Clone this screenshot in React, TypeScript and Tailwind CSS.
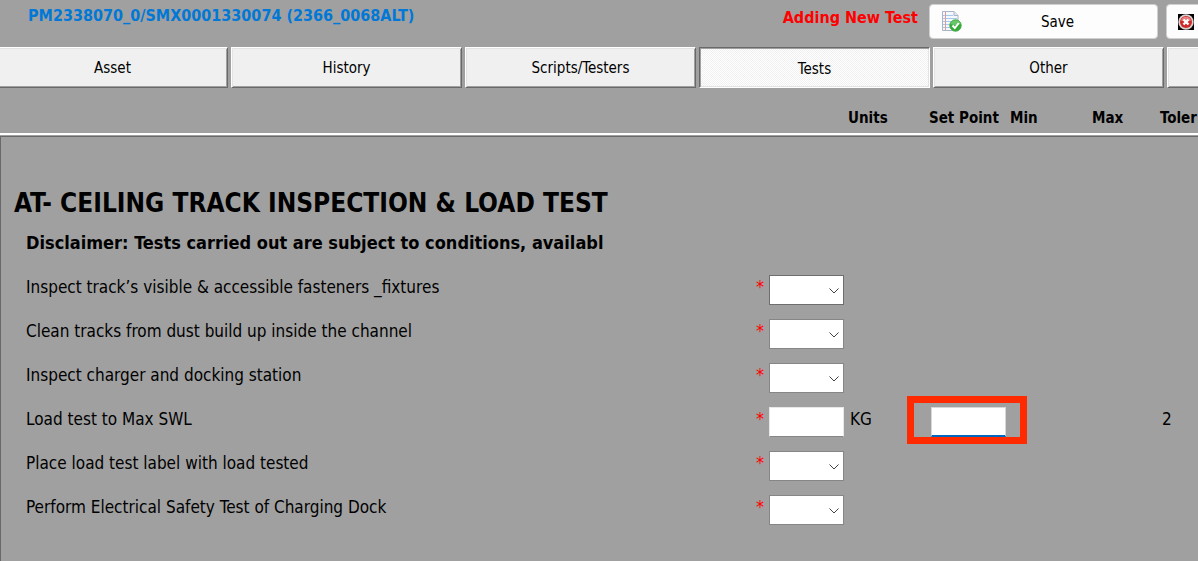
import React from "react";

type Test = { id: string; label: string; kind: "select" | "number"; units?: string; tolerance?: string };

const tests: Test[] = [
  { id: "fasteners", label: "Inspect track’s visible & accessible fasteners _fixtures", kind: "select" },
  { id: "clean", label: "Clean tracks from dust build up inside the channel", kind: "select" },
  { id: "charger", label: "Inspect charger and docking station", kind: "select" },
  { id: "load", label: "Load test to Max SWL", kind: "number", units: "KG", tolerance: "2" },
  { id: "label", label: "Place load test label with load tested", kind: "select" },
  { id: "safety", label: "Perform Electrical Safety Test of Charging Dock", kind: "select" },
];

const tabs = ["Asset", "History", "Scripts/Testers", "Tests", "Other", ""];

function SaveIcon() {
  return (
    <svg width="20" height="21" viewBox="0 0 20 21" aria-hidden="true">
      <path d="M.5.5h11.500l4 4v15H.5z" fill="#f4f8fd" stroke="#a9b4c4" />
      <path d="M12 .5v4h4" fill="#dfe6ef" stroke="#a9b4c4" />
      <path d="M1 4.500h10M1 7.500h14M1 10.500h14M1 13.500h14M1 16.500h14" stroke="#a5c8ee" />
      <path d="M3.500 1v18" stroke="#e59a94" />
      <circle cx="13.500" cy="14.500" r="5.700" fill="#35a83a" stroke="#3fae45" />
      <path d="M8.500 13a5.200 5.200 0 0 1 10 0c-3 1.500-7 1.500-10 0z" fill="#7fd27c" opacity=".7" />
      <path d="M10.500 14.500l2.300 2.500 4-5" fill="none" stroke="#fff" strokeWidth="2" />
    </svg>
  );
}

function CancelIcon() {
  return (
    <svg width="16" height="16" viewBox="0 0 16 16" className="shrink-0" aria-hidden="true">
      <path d="M0 0h16v16H0z" fill="#000" />
      <circle cx="8" cy="8" r="7.700" fill="#d9d0d0" />
      <circle cx="8" cy="8" r="6" fill="#cf2a2a" />
      <path d="M3 6.500a5.200 5.200 0 0 1 10 0c-3 1-7 1-10 0z" fill="#e98080" />
      <path d="M5.500 5.500l5 5M10.500 5.500l-5 5" stroke="#fff" strokeWidth="2.400" />
    </svg>
  );
}

function Tab({ name, active }: { name: string; active: boolean }) {
  const base = "h-[41px] w-[231px] shrink-0 border text-[15px] text-black";
  return active ? (
    <button
      role="tab"
      aria-selected="true"
      className={`${base} border-t-[#696969] border-l-[#696969] border-r-white border-b-white bg-[repeating-conic-gradient(#ffffff_0_25%,#f0f0f0_0_50%)] bg-[length:2px_2px] pt-1 shadow-[inset_1px_1px_0_#a0a0a0,inset_-1px_-1px_0_#e3e3e3]`}
    >
      {name}
    </button>
  ) : (
    <button
      role="tab"
      aria-selected="false"
      aria-label={name || "More"}
      className={`${base} border-t-white border-l-white border-r-[#696969] border-b-[#696969] bg-[#f0f0f0] pt-[2px] shadow-[inset_1px_1px_0_#e3e3e3,inset_-1px_-1px_0_#a0a0a0]`}
    >
      {name}
    </button>
  );
}

function ValueField({ test, first }: { test: Test; first: boolean }) {
  if (test.kind === "number") {
    return <input id={test.id} type="text" className="block h-[30px] w-[75px] border border-[#e8e8e8] border-b-[#868686] bg-white px-1 outline-none" />;
  }
  return (
    <div className="relative w-[75px]">
      <select
        id={test.id}
        className={`block h-[30px] w-full appearance-none border bg-white px-1 outline-none ${first ? "border-[#6e6e6e]" : "border-[#868686]"}`}
      >
        <option value=""></option>
        <option>Pass</option>
        <option>Fail</option>
      </select>
      <svg width="10" height="6" viewBox="0 0 10 6" className="pointer-events-none absolute top-[13px] right-[5px]" aria-hidden="true">
        <path d="M.5.5L5 5 9.500.5" fill="none" stroke="#444" />
      </svg>
    </div>
  );
}

export default function App() {
  return (
    <div className="flex min-h-screen flex-col overflow-hidden bg-[#a0a0a0] font-['DejaVu_Sans_Condensed','DejaVu_Sans',sans-serif] text-black">
      <header className="flex h-[47px] items-start pt-1">
        <h1 className="w-[751px] shrink-0 pt-[2px] pl-7 text-[16px] leading-5 font-bold text-[#0078d7]">
          PM2338070_0/SMX0001330074 (2366_0068ALT)
        </h1>
        <p className="w-[167px] shrink-0 pt-1 text-right text-[16px] leading-5 font-bold whitespace-nowrap text-[#ff0000]">Adding New Test</p>
        <button className="ml-[11px] flex h-[35px] w-[229px] shrink-0 items-center rounded-[4px] border border-[#d0d0d0] bg-[#fdfdfd] pr-[11px] pl-3 text-[15px]">
          <SaveIcon />
          <span className="flex-1 pt-[2px] pl-[7px] text-center">Save</span>
        </button>
        <button
          aria-label="Cancel"
          className="ml-2 flex h-[35px] w-[229px] shrink-0 items-center rounded-[4px] border border-[#d0d0d0] bg-[#fdfdfd] pl-[11px]"
        >
          <CancelIcon />
        </button>
      </header>

      <nav role="tablist" className="-ml-[3px] flex gap-[3px]">
        {tabs.map((t) => (
          <Tab key={t || "more"} name={t} active={t === "Tests"} />
        ))}
      </nav>

      <table className="w-[1260px] table-fixed border-separate border-spacing-0 text-left">
        <colgroup>
          <col className="w-[756px]" />
          <col className="w-[13px]" />
          <col className="w-[79px]" />
          <col className="w-[81px]" />
          <col className="w-[81px]" />
          <col className="w-[82px]" />
          <col className="w-[68px]" />
          <col />
        </colgroup>
        <thead>
          <tr className="h-[47px] text-[15px] leading-5 whitespace-nowrap [&>*]:border-b-2 [&>*]:border-white [&>*]:pt-[19px] [&>*]:pb-1">
            <td colSpan={3}></td>
            <th scope="col">Units</th>
            <th scope="col">Set Point</th>
            <th scope="col">Min</th>
            <th scope="col">Max</th>
            <th scope="col">Toler</th>
          </tr>
        </thead>
        <tbody className="text-[17px] leading-6">
          <tr className="h-px">
            <td colSpan={8} className="p-0"></td>
          </tr>
          <tr className="h-[88px]">
            <td colSpan={8} className="border-t border-l border-[#696969] pt-[46px] pl-[13px] align-top">
              <h2 className="text-[26px] leading-10 font-bold">AT- CEILING TRACK INSPECTION &amp; LOAD TEST</h2>
            </td>
          </tr>
          <tr className="h-11">
            <td colSpan={8} className="border-l border-[#696969] pt-[7px] pl-[25px] align-top">
              <p className="text-[18px] font-bold whitespace-nowrap">Disclaimer: Tests carried out are subject to conditions, availabl</p>
            </td>
          </tr>
          {tests.map((t, i) => (
            <tr key={t.id} className="h-11 align-top [&>*]:pt-[7px]">
              <td className="border-l border-[#696969] pl-[25px]">
                <label htmlFor={t.id}>{t.label}</label>
              </td>
              <td className="text-[18px] text-[#ff0000]">*</td>
              <td>
                <ValueField test={t} first={i === 0} />
              </td>
              <td className="pl-[2px]">{t.units}</td>
              <td className="pl-[2px]">
                {t.kind === "number" && (
                  <div className="relative w-[75px]">
                    <input
                      type="text"
                      aria-label={`${t.label} set point`}
                      className="block h-[30px] w-full border border-b-2 border-[#d8d8d8] border-b-[#0067c0] bg-white px-1 outline-none"
                    />
                    <div className="pointer-events-none absolute -top-[11px] -right-[21px] -bottom-[7px] -left-6 border-[7px] border-[#ff2a00]" />
                  </div>
                )}
              </td>
              <td></td>
              <td></td>
              <td className="pl-[2px]">{t.tolerance}</td>
            </tr>
          ))}
        </tbody>
      </table>
      <div className="flex-1 border-l border-[#696969]" />
    </div>
  );
}
